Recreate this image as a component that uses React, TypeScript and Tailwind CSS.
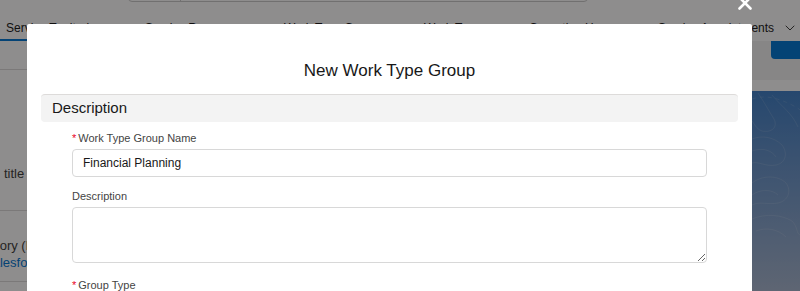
import * as React from 'react';
import { ChevronDown } from 'lucide-react';

const tabs = [
  { label: 'Service Territories', w: 'w-[145px] pl-[6px]', active: true },
  { label: 'Service Resources', w: 'w-[139px]' },
  { label: 'Work Type Groups', w: 'w-[140px]' },
  { label: 'Work Types', w: 'w-[105px]' },
  { label: 'Operating Hours', w: 'w-[129px]' },
];

export default function App() {
  return (
    <div
      className="relative w-[800px] h-[291px] overflow-hidden bg-white text-[#181818]"
      style={{ fontFamily: '"Liberation Sans", Arial, sans-serif' }}
    >
      {/* Page behind the modal */}
      <div className="flex flex-col h-full">
        {/* search bar edge */}
        <div className="h-[2px] flex items-end pl-[128px]">
          <div className="w-[460px] h-[30px] border border-[#c9c9c9] rounded-b-[4px] flex">
            <div className="w-[52px] border-r border-[#c9c9c9]" />
          </div>
        </div>

        {/* nav tabs */}
        <div className="h-[42px] flex items-stretch text-[12px] text-[#181818]">
          {tabs.map((t) => (
            <div
              key={t.label}
              className={`${t.w} flex items-center pt-[14px] shrink-0 border-b-[2px] ${t.active ? 'border-[#0176d3]' : 'border-transparent'}`}
            >
              <span className="whitespace-nowrap">{t.label}</span>
              <ChevronDown size={14} strokeWidth={1.5} className="ml-[8px] text-[#5c5c5c]" />
            </div>
          ))}
          <div className="flex items-center pt-[14px] border-b-[2px] border-transparent">
            <span className="whitespace-nowrap">Service Appointments</span>
            <ChevronDown size={16} strokeWidth={1.5} className="ml-[8px] text-[#3e3e3c]" />
          </div>
        </div>

        {/* content area */}
        <div className="flex flex-1">
          <div className="flex-1 flex flex-col text-[13px]">
            <div className="h-[29px] border-b border-[#dddbda]" />
            <div className="pt-[95px] pb-[27px] border-b border-[#dddbda] pl-[4px] leading-[18px] text-[#3e3e3c]">
              title
            </div>
            <div className="pt-[26px] pb-[10px] border-b border-[#dddbda] overflow-hidden">
              <div className="leading-[17px] text-[#3e3e3c] whitespace-nowrap -ml-[35px]">Category (Managed)</div>
              <div className="leading-[17px] text-[#0176d3] whitespace-nowrap -ml-[16px]">Salesforce</div>
            </div>
          </div>

          <div className="w-[48px] flex flex-col bg-[#f2f2f2]">
            <div className="h-[18px] flex justify-end">
              <div className="w-[29px] h-full bg-[#0176d3] rounded-bl-[4px]" />
            </div>
            <div className="h-[21px]" />
            <div className="h-[11px] bg-white" />
            <div className="flex-1 bg-gradient-to-b from-[#3f7fc6] to-[#a7b6cf] overflow-hidden">
              <svg width="48" height="200" viewBox="0 0 48 200" fill="none" stroke="white" strokeOpacity="0.12" strokeWidth="1">
                <path d="M0 8 C12 4 24 6 40 14 S48 24 48 24" strokeDasharray="4 4" />
                <path d="M6 2 C14 14 18 22 22 28 C26 36 20 42 10 40 C4 38 2 32 0 30" />
                <path d="M0 48 C10 44 22 46 30 54 C36 62 34 72 24 74 C14 76 6 70 0 72" />
                <path d="M0 60 C12 56 20 60 24 66" />
                <path d="M0 92 C10 84 26 84 34 92 C40 100 36 110 26 112 C16 114 8 110 0 114" />
                <path d="M0 104 C8 98 20 98 26 104" />
                <path d="M0 128 C14 122 30 124 40 130 C46 136 44 142 48 144" />
                <path d="M4 140 C14 136 26 138 34 146" />
                <path d="M20 4 C30 16 40 22 46 36" />
              </svg>
            </div>
          </div>
        </div>
      </div>

      {/* Backdrop */}
      <div className="absolute inset-0 bg-[rgba(8,7,7,0.46)]" />

      {/* Modal */}
      <div className="absolute left-[27px] top-[24px] w-[725px] h-[300px] bg-white rounded-t-[2px]">
        <button className="absolute -top-[28px] right-0 w-[14px] h-[14px]" aria-label="Close">
          <svg width="14" height="14" viewBox="0 0 14 14" stroke="white" strokeWidth="2.6" strokeLinecap="round">
            <path d="M1.5 1.5 L12.5 12.5 M12.5 1.5 L1.5 12.5" />
          </svg>
        </button>

        <div className="pt-[35px] pb-[11px] text-center">
          <h2 className="text-[17px] leading-[24px] text-[#181818]">New Work Type Group</h2>
        </div>

        <div className="px-[14px]">
          <div className="h-[28px] flex items-center pl-[11px] bg-[#f3f3f3] border-t border-[#dddbda] rounded-[4px]">
            <h3 className="text-[15px] text-[#181818]">Description</h3>
          </div>

          <div className="px-[31px]">
            <label className="block mt-[9px] mb-[4px] text-[11px] leading-[14px] text-[#444444]">
              <span className="text-[#ea001e] mr-[2px]">*</span>Work Type Group Name
            </label>
            <input
              readOnly
              value="Financial Planning"
              className="w-full h-[28px] px-[10px] border border-[#d8d8d8] rounded-[4px] text-[12px] text-[#181818] outline-none"
            />

            <label className="block mt-[12px] mb-[4px] text-[11px] leading-[14px] text-[#444444]">
              Description
            </label>
            <textarea
              readOnly
              className="block w-full h-[56px] px-[10px] border border-[#d8d8d8] rounded-[4px] text-[12px] outline-none"
            />

            <label className="block mt-[15px] text-[11px] leading-[14px] text-[#444444]">
              <span className="text-[#ea001e] mr-[2px]">*</span>Group Type
            </label>
          </div>
        </div>
      </div>
    </div>
  );
}
